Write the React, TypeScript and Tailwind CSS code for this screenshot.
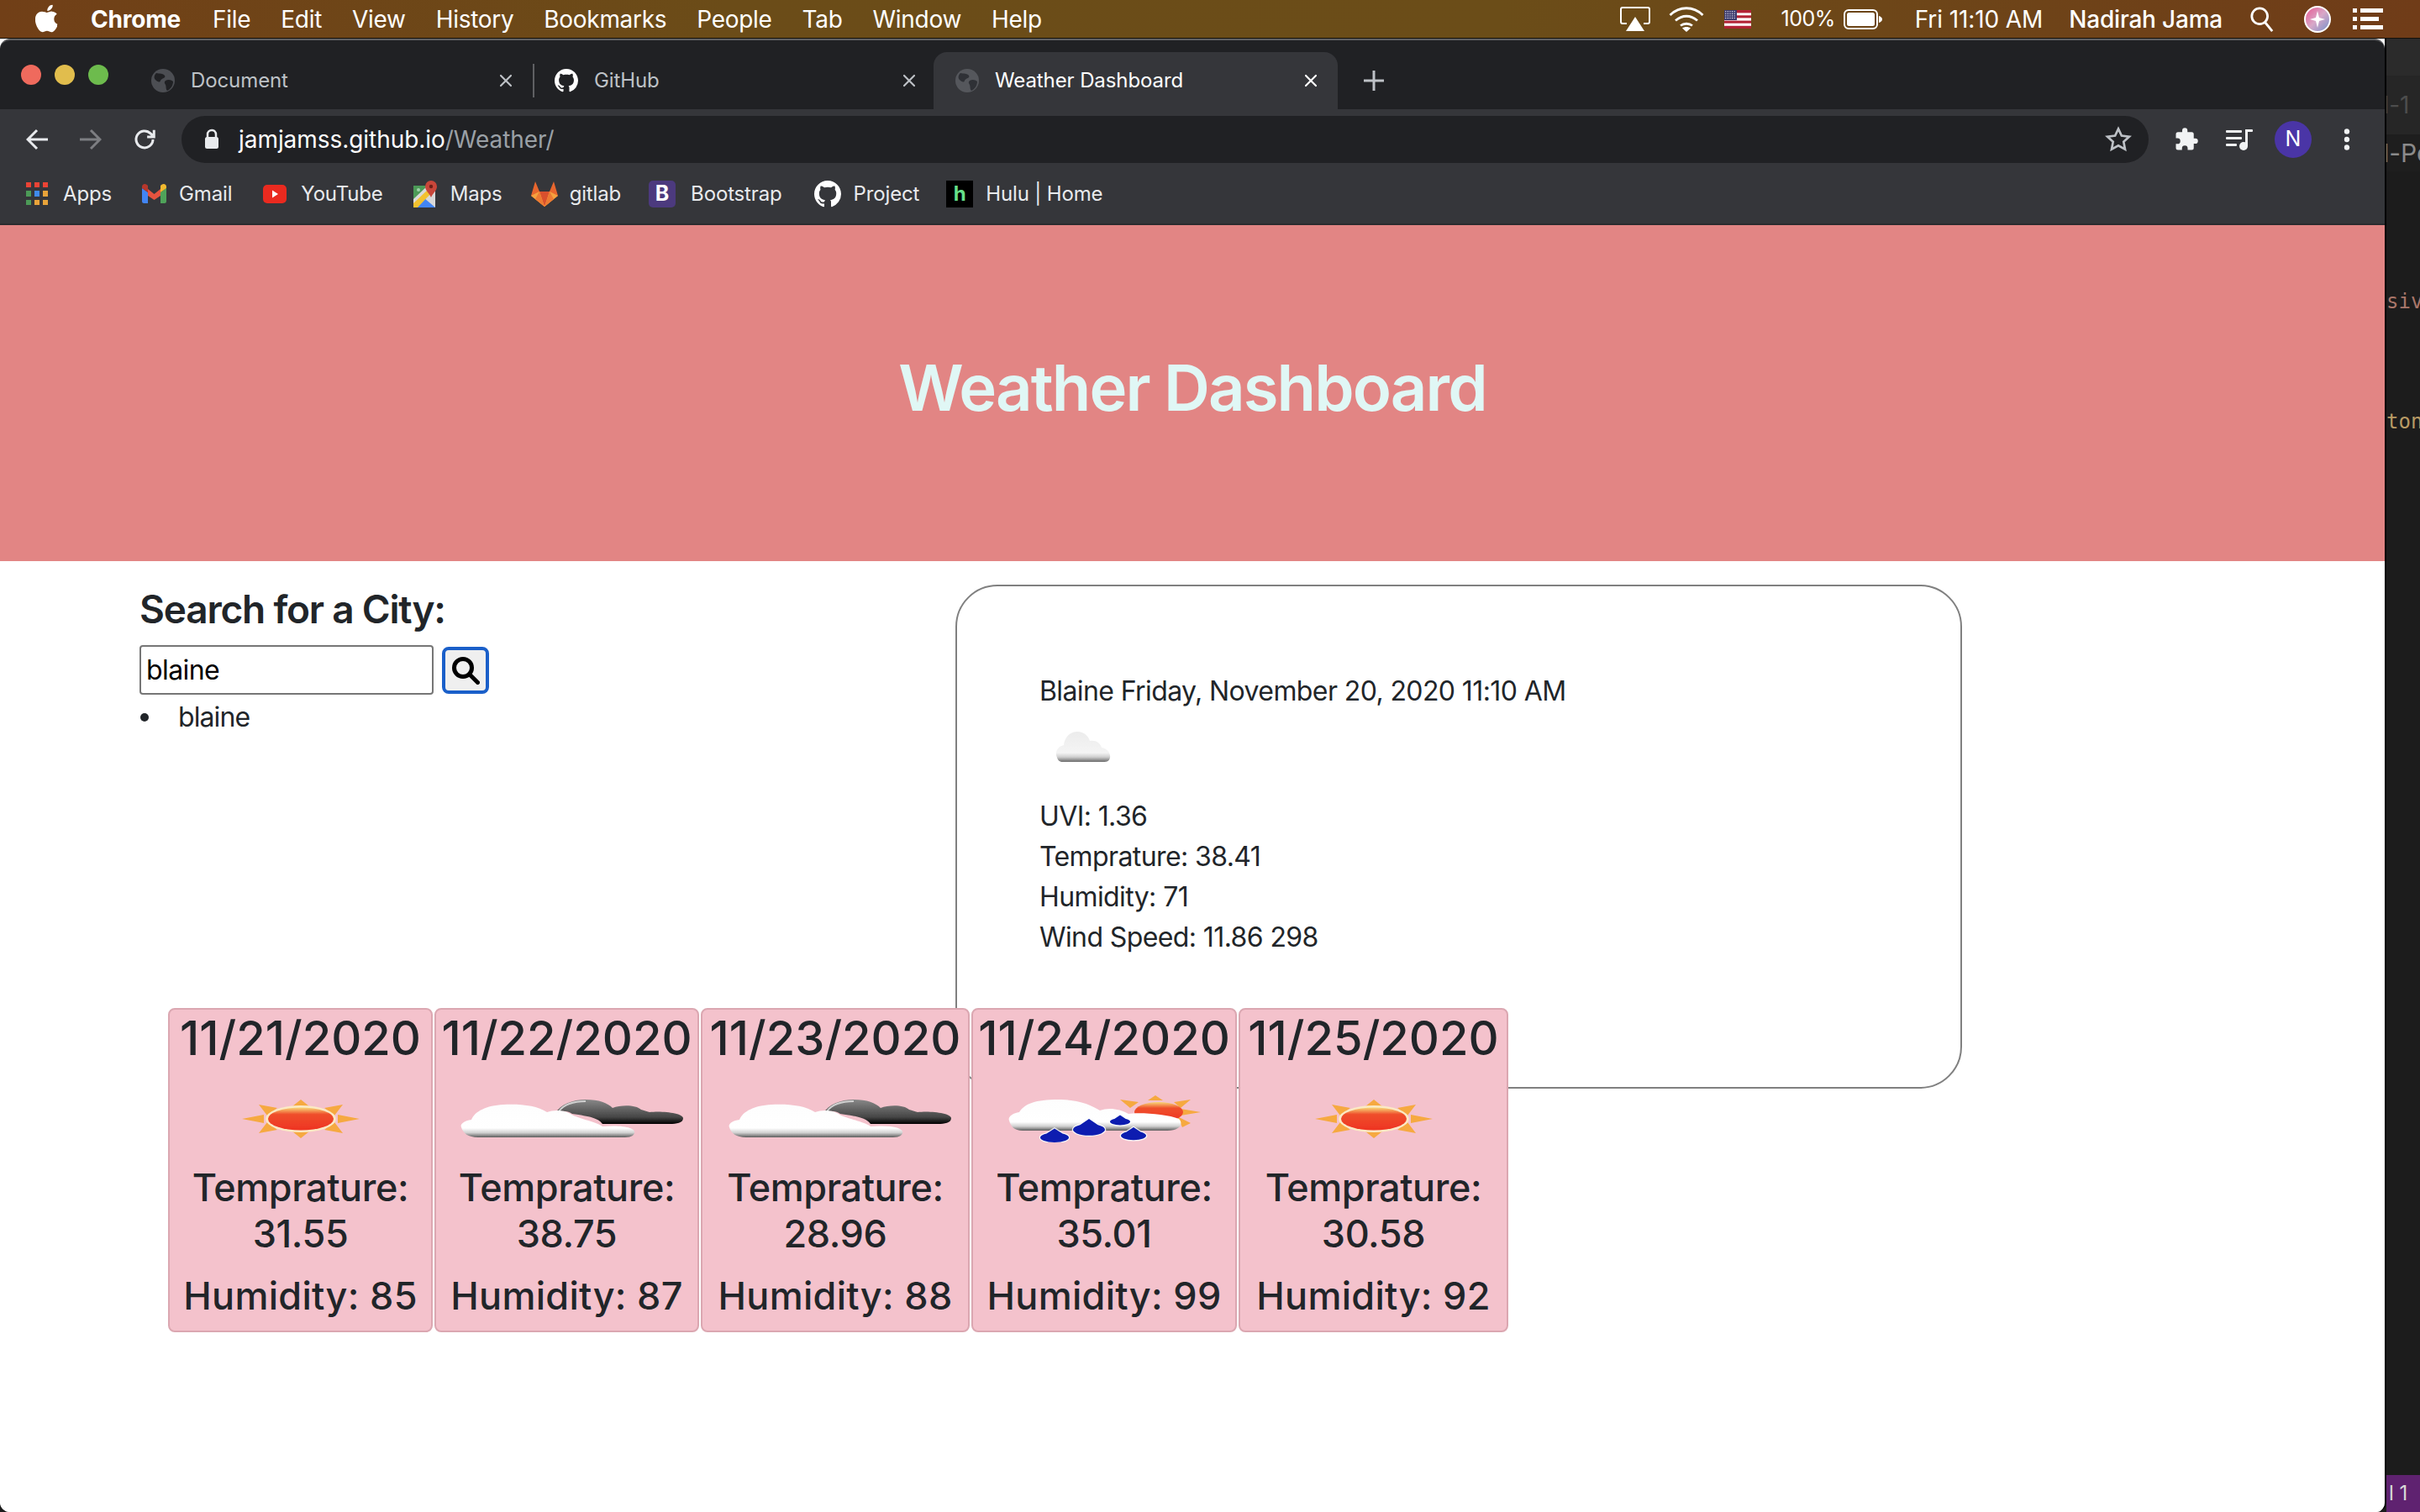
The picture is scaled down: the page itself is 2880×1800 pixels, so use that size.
import React from "react";

const UI = "font-['Inter','Liberation_Sans',sans-serif]";

function Globe({ dim = false }: { dim?: boolean }) {
  const c = dim ? "#55575c" : "#4c4e53";
  return (
    <svg width="28" height="28" viewBox="0 0 28 28">
      <circle cx="14" cy="14" r="14" fill={c} />
      <path d="M6 5c4 1 8 0 10 3s-4 3-5 6-4 1-6-1-2-5 1-8zM17 14c3-2 7-1 9 1 0 5-3 9-7 11-2-2-1-5-2-7s-2-3 0-5z" fill={dim ? "#2f3136" : "#202124"} />
    </svg>
  );
}

function GitHubMark({ size = 32 }: { size?: number }) {
  return (
    <svg width={size} height={size} viewBox="0 0 16 16" fill="#ffffff">
      <path d="M8 0C3.58 0 0 3.58 0 8c0 3.54 2.29 6.53 5.47 7.59.4.07.55-.17.55-.38 0-.19-.01-.82-.01-1.49-2.01.37-2.53-.49-2.69-.94-.09-.23-.48-.94-.82-1.13-.28-.15-.68-.52-.01-.53.63-.01 1.08.58 1.23.82.72 1.21 1.87.87 2.33.66.07-.52.28-.87.51-1.07-1.78-.2-3.64-.89-3.64-3.95 0-.87.31-1.59.82-2.15-.08-.2-.36-1.02.08-2.12 0 0 .67-.21 2.2.82.64-.18 1.32-.27 2-.27s1.36.09 2 .27c1.53-1.04 2.2-.82 2.2-.82.44 1.1.16 1.92.08 2.12.51.56.82 1.27.82 2.15 0 3.07-1.87 3.75-3.65 3.95.29.25.54.73.54 1.48 0 1.07-.01 1.93-.01 2.2 0 .21.15.46.55.38A8.01 8.01 0 0 0 16 8c0-4.42-3.58-8-8-8z" />
    </svg>
  );
}

function CloseX({ color = "#bdc1c6" }: { color?: string }) {
  return (
    <svg width="16" height="16" viewBox="0 0 16 16" stroke={color} strokeWidth="2.2" strokeLinecap="round">
      <path d="M2 2l12 12M14 2L2 14" />
    </svg>
  );
}

function Tab({ title, active, icon, cls }: { title: string; active?: boolean; icon: React.ReactNode; cls: string }) {
  return (
    <div className={`flex h-[68px] items-center ${cls} ${active ? "rounded-t-[16px] bg-[#35363a] text-[#ffffff]" : "text-[#bdc1c6]"}`}>
      <div className="flex w-[28px] shrink-0 justify-center">{icon}</div>
      <span className="ml-[19px] flex-1 text-[24px] leading-none tracking-[-0.1px]">{title}</span>
      <CloseX color={active ? "#ffffff" : "#bdc1c6"} />
    </div>
  );
}

function Apple() {
  return (
    <svg width="30" height="34" viewBox="0 0 170 200" fill="#fff">
      <path d="M150 156c-3 6-6 12-10 17-5 7-9 12-13 15-5 5-11 7-17 7-4 0-9-1-15-4-6-2-11-4-16-4s-11 1-17 4c-6 2-10 4-14 4-6 0-12-2-18-8-4-3-9-9-14-17-6-8-10-18-14-29-4-12-6-23-6-34 0-13 3-24 8-33 4-7 10-13 17-17s15-6 23-6c5 0 11 1 19 4s12 4 14 4c2 0 7-2 16-5 8-3 15-4 21-3 15 1 27 7 34 18-14 8-20 20-20 35 0 11 4 21 12 28 4 4 8 6 12 8-1 3-2 6-3 9zM119 7c0 9-3 18-10 26-8 9-18 15-28 14v-4c0-9 4-18 10-25 3-4 7-7 12-10s10-4 14-4c0 1 1 2 1 3z" />
    </svg>
  );
}

function MenuIcons() {
  const stars: React.ReactNode[] = [];
  for (let r = 0; r < 4; r++) {
    for (let c = 0; c < 5; c++) {
      stars.push(<rect key={`${r}-${c}`} x={1.2 + c * 2.6} y={1.2 + r * 2.6} width="1.1" height="1.1" fill="#fff" />);
    }
  }
  return (
    <div className="flex items-center">
      <svg width="36" height="29" viewBox="0 0 36 29">
        <path d="M8 20H3a2 2 0 0 1-2-2V3a2 2 0 0 1 2-2h30a2 2 0 0 1 2 2v15a2 2 0 0 1-2 2h-5" fill="none" stroke="#fff" strokeWidth="2" />
        <path d="M18 12l11 17H7z" fill="#fff" />
      </svg>
      <svg width="42" height="30" viewBox="0 0 42 30" className="ml-[22px]" fill="none" stroke="#fff" strokeWidth="2.800">
        <path d="M1.500 10c11-11 28-11 39 0M8 16.500c8-7 18-7 26 0M14 22.500c4-3 10-3 14 0" />
        <path d="M21 30l-5-4.500c3-2 7-2 10 0z" fill="#fff" stroke="none" />
      </svg>
      <svg width="32" height="22" viewBox="0 0 32 22" className="ml-[24px]">
        <rect width="32" height="22" fill="#fff" />
        <rect y="0" width="32" height="3.400" fill="#b22234" />
        <rect y="6.300" width="32" height="3.100" fill="#b22234" />
        <rect y="12.600" width="32" height="3.100" fill="#b22234" />
        <rect y="18.800" width="32" height="3.200" fill="#b22234" />
        <rect width="15" height="12" fill="#3c3b6e" />
        {stars}
      </svg>
    </div>
  );
}

function Battery() {
  return (
    <svg width="46" height="24" viewBox="0 0 46 24">
      <rect x="1" y="1" width="39" height="22" rx="5" fill="none" stroke="#fff" strokeWidth="2" />
      <rect x="4" y="4" width="33" height="16" rx="2.500" fill="#fff" />
      <path d="M42 8c2 .5 4 2 4 4s-2 3.500-4 4z" fill="#fff" />
    </svg>
  );
}

function Siri() {
  return (
    <svg width="32" height="32" viewBox="0 0 32 32">
      <defs>
        <linearGradient id="siri" x1="0" y1="0" x2="1" y2="1">
          <stop offset="0" stopColor="#e9558f" />
          <stop offset="0.5" stopColor="#d8a8c8" />
          <stop offset="1" stopColor="#6f8fc9" />
        </linearGradient>
      </defs>
      <circle cx="16" cy="16" r="15" fill="url(#siri)" stroke="#fff" strokeWidth="2" />
      <path d="M16 6l2 8 7 2-7 2-2 8-2-8-7-2 7-2z" fill="#fff" />
    </svg>
  );
}

function MenuBar() {
  return (
    <div className={`flex h-[46px] shrink-0 items-center border-b-[1px] border-[#14100a] bg-[linear-gradient(90deg,#713f17,#6b4c18_30%,#6b4d18_62%,#703c18)] text-[#ffffff] ${UI}`}>
      <div className="ml-[42px] mb-[2px]"><Apple /></div>
      <span className="ml-[36px] text-[28px] font-bold tracking-[-0.2px]">Chrome</span>
      <div className="ml-[38px] flex gap-[36px] text-[28px] font-normal tracking-[-0.3px]">
        <span>File</span><span>Edit</span><span>View</span><span>History</span><span>Bookmarks</span><span>People</span><span>Tab</span><span>Window</span><span>Help</span>
      </div>
      <div className="ml-auto flex items-center pr-[44px]">
        <MenuIcons />
        <span className="ml-[35px] text-[25px] tracking-[-0.5px]">100%</span>
        <div className="ml-[10px]"><Battery /></div>
        <span className="ml-[39px] text-[28px] tracking-[-0.1px]">Fri 11:10 AM</span>
        <span className="ml-[31px] text-[28px] font-medium tracking-[-0.2px]">Nadirah Jama</span>
        <svg width="30" height="34" viewBox="0 0 32 34" className="ml-[32px]" fill="none" stroke="#fff" strokeWidth="3">
          <circle cx="13" cy="13" r="10" />
          <path d="M20 21l9 11" />
        </svg>
        <div className="ml-[35px]"><Siri /></div>
        <svg width="36" height="28" viewBox="0 0 36 28" className="ml-[26px]" fill="#fff">
          <rect x="0" y="1" width="5" height="5" /><rect x="9" y="1" width="27" height="5" />
          <rect x="0" y="11" width="5" height="5" /><rect x="9" y="11" width="22" height="5" />
          <rect x="0" y="21" width="5" height="5" /><rect x="9" y="21" width="27" height="5" />
        </svg>
      </div>
    </div>
  );
}

function AppsIcon() {
  const colors = ["#ea4335", "#ea4335", "#ea4335", "#4c9a57", "#3f8bed", "#e8a33a", "#4c9a57", "#e8a33a", "#e8a33a"];
  return (
    <div className="grid h-[27px] w-[26px] grid-cols-3 gap-[4px]">
      {colors.map((c, i) => (
        <div key={i} style={{ backgroundColor: c }} />
      ))}
    </div>
  );
}

function GmailIcon() {
  return (
    <svg width="29" height="23" viewBox="0 0 29 23">
      <path d="M0 5l7 5v13H2.500A2.500 2.500 0 0 1 0 20.500z" fill="#4285f4" />
      <path d="M29 5l-7 5v13h4.500a2.500 2.500 0 0 0 2.500-2.500z" fill="#4fa35a" />
      <path d="M7 6l7.500 6L22 6v8l-7.500 5L7 14z" fill="#e5533f" />
      <path d="M0 3.500C0 .5 3 -1 5.500 .8L7 2v8L0 5z" fill="#b5372c" />
      <path d="M29 3.500C29 .5 26 -1 23.500 .8L22 2v8l7-5z" fill="#f2b92f" />
    </svg>
  );
}

function YoutubeIcon() {
  return (
    <svg width="28" height="22" viewBox="0 0 28 22">
      <rect width="28" height="22" rx="5" fill="#ea2a1f" />
      <path d="M11 6.500l7 4.500-7 4.500z" fill="#fff" />
    </svg>
  );
}

function MapsIcon() {
  return (
    <svg width="30" height="32" viewBox="0 0 30 32">
      <path d="M1 6h26v26H1z" fill="#d9d9d9" />
      <path d="M1 6h17L1 22z" fill="#4c9a57" />
      <path d="M1 32l12-12 14 12z" fill="#4285f4" />
      <path d="M1 27L20 9l4 4L6 32H1z" fill="#f2c230" />
      <circle cx="7" cy="11" r="2" fill="#9fd0a8" />
      <path d="M22 0a7 7 0 0 1 7 7c0 5-5 8-7 13-2-5-7-8-7-13a7 7 0 0 1 7-7z" fill="#c8463a" />
      <circle cx="22" cy="7" r="2.200" fill="#6e2018" />
    </svg>
  );
}

function GitlabIcon() {
  return (
    <svg width="32" height="30" viewBox="0 0 32 30">
      <path d="M16 30L0 17 5 0l5 12h12l5-12 5 17z" fill="#e8662e" />
      <path d="M16 30L10 12h12z" fill="#d9502d" />
      <path d="M16 30L0 17l10-5z" fill="#f4a23f" />
      <path d="M16 30l16-13-10-5z" fill="#f4a23f" />
      <path d="M16 30l-11-9 5-9zM16 30l11-9-5-9z" fill="#ec7a33" />
    </svg>
  );
}

function BootstrapIcon() {
  return (
    <div className="flex h-[32px] w-[32px] items-center justify-center rounded-[5px] bg-[#4c3a7e] text-[25px] font-bold leading-none text-[#ffffff]">B</div>
  );
}

function HuluIcon() {
  return (
    <div className="flex h-[32px] w-[32px] items-center justify-center bg-[#000000] text-[24px] font-bold leading-none text-[#66e08a]">h</div>
  );
}

function Bookmark({ icon, label, cls }: { icon: React.ReactNode; label: string; cls: string }) {
  return (
    <div className={`flex items-center ${cls}`}>
      <div className="flex w-[32px] shrink-0 justify-center">{icon}</div>
      <span className="text-[24px] tracking-[-0.15px] text-[#e8eaed]">{label}</span>
    </div>
  );
}

function BrowserChrome() {
  return (
    <div className={`shrink-0 ${UI}`}>
      <div className="h-[16px] rounded-t-[12px] border-t-[2px] border-[#5f6063] bg-[#202124]" />
      <div className="flex h-[68px] items-stretch bg-[#202124]">
        <div className="ml-[25px] mr-[25px] flex items-center gap-[16px] pb-[14px]">
          <div className="h-[24px] w-[24px] rounded-full bg-[#ef6a5d]" />
          <div className="h-[24px] w-[24px] rounded-full bg-[#e1bd4d]" />
          <div className="h-[24px] w-[24px] rounded-full bg-[#6dbb4d]" />
        </div>
        <Tab title="Document" icon={<Globe />} cls="w-[480px] pl-[26px] pr-[24px]" />
        <div className="my-[14px] w-[2px] bg-[#5f6063]" />
        <Tab title="GitHub" icon={<GitHubMark size={32} />} cls="w-[475px] pl-[24px] pr-[21px]" />
        <Tab title="Weather Dashboard" active icon={<Globe dim />} cls="w-[481px] pl-[26px] pr-[24px]" />
        <div className="ml-[31px] flex items-center">
          <svg width="24" height="24" viewBox="0 0 24 24" stroke="#bdc1c6" strokeWidth="3">
            <path d="M12 0v24M0 12h24" />
          </svg>
        </div>
      </div>
      <div className="flex h-[72px] items-center bg-[#35363a]">
        <div className="ml-[31px] flex items-center">
          <svg width="26" height="26" viewBox="0 0 26 26" fill="none" stroke="#e8eaed" strokeWidth="3">
            <path d="M26 13H3M13 2L2 13l11 11" />
          </svg>
          <svg width="26" height="26" viewBox="0 0 26 26" fill="none" stroke="#7d7e82" strokeWidth="3" className="ml-[38px]">
            <path d="M0 13h23M13 2l11 11-11 11" />
          </svg>
          <svg width="30" height="30" viewBox="0 0 24 24" fill="none" stroke="#e8eaed" strokeWidth="2.400" className="ml-[36px]">
            <path d="M20 12a8 8 0 1 1-2.300-5.700L21 9.500M21 3v6.500h-6.500" />
          </svg>
        </div>
        <div className="ml-[29px] flex h-[56px] flex-1 items-center rounded-full bg-[#202124] pl-[26px] pr-[20px]">
          <svg width="20" height="26" viewBox="0 0 20 26" fill="#e8eaed">
            <rect x="2" y="10" width="16" height="14" rx="2.500" />
            <path d="M5 11V7a5 5 0 0 1 10 0v4" fill="none" stroke="#e8eaed" strokeWidth="2.500" />
          </svg>
          <span className="ml-[22px] text-[28px] tracking-[-0.05px] text-[#ffffff]">jamjamss.github.io<span className="text-[#9aa0a6]">/Weather/</span></span>
          <svg width="32" height="32" viewBox="0 0 24 24" fill="none" stroke="#bdc1c6" strokeWidth="2" className="ml-auto">
            <path d="M12 2.500l2.900 6.200 6.800.8-5 4.600 1.300 6.700-6-3.300-6 3.300 1.300-6.700-5-4.600 6.800-.8z" />
          </svg>
        </div>
        <svg width="30" height="30" viewBox="0 0 24 24" fill="#f1f3f4" className="ml-[30px]">
          <path d="M20.500 11H19V7a2 2 0 0 0-2-2h-4V3.500a2.500 2.500 0 0 0-5 0V5H4a2 2 0 0 0-2 2v3.800h1.500a2.700 2.700 0 0 1 0 5.400H2V20a2 2 0 0 0 2 2h3.800v-1.500a2.700 2.700 0 0 1 5.400 0V22H17a2 2 0 0 0 2-2v-4h1.500a2.500 2.500 0 0 0 0-5z" />
        </svg>
        <svg width="32" height="26" viewBox="0 0 32 26" fill="#f1f3f4" className="ml-[32px]">
          <rect x="0" y="2" width="19" height="3" rx="1" />
          <rect x="0" y="10" width="19" height="3" rx="1" />
          <rect x="0" y="18" width="13" height="3" rx="1" />
          <rect x="23" y="1" width="3" height="20" />
          <rect x="23" y="1" width="9" height="3" rx="1" />
          <circle cx="21" cy="21" r="5" />
        </svg>
        <div className="ml-[26px] flex h-[44px] w-[44px] items-center justify-center rounded-full bg-[#4a35a6] text-[25px] text-[#ffffff]">N</div>
        <svg width="8" height="26" viewBox="0 0 8 26" fill="#f1f3f4" className="ml-[38px] mr-[41px]">
          <circle cx="4" cy="3.500" r="3.200" /><circle cx="4" cy="13" r="3.200" /><circle cx="4" cy="22.500" r="3.200" />
        </svg>
      </div>
      <div className="flex h-[66px] items-center border-b-[2px] border-[#2b2c2f] bg-[#35363a] pb-[7px]">
        <div className="ml-[28px] flex items-center">
          <Bookmark cls="gap-[15px]" icon={<AppsIcon />} label="Apps" />
          <Bookmark cls="ml-[34px] gap-[14px]" icon={<GmailIcon />} label="Gmail" />
          <Bookmark cls="ml-[35px] gap-[15px]" icon={<YoutubeIcon />} label="YouTube" />
          <Bookmark cls="ml-[34px] gap-[14px]" icon={<MapsIcon />} label="Maps" />
          <Bookmark cls="ml-[34px] gap-[14px]" icon={<GitlabIcon />} label="gitlab" />
          <Bookmark cls="ml-[33px] gap-[18px]" icon={<BootstrapIcon />} label="Bootstrap" />
          <Bookmark cls="ml-[38px] gap-[15px]" icon={<GitHubMark size={32} />} label="Project" />
          <Bookmark cls="ml-[32px] gap-[15px]" icon={<HuluIcon />} label="Hulu | Home" />
        </div>
      </div>
    </div>
  );
}

function Defs() {
  return (
    <svg width="0" height="0" className="absolute">
      <defs>
        <filter id="soft" x="-5%" y="-5%" width="110%" height="110%">
          <feGaussianBlur stdDeviation="0.7" />
        </filter>
        <linearGradient id="white-cloud" x1="0" y1="0" x2="0" y2="1">
          <stop offset="0" stopColor="#fdfdfd" />
          <stop offset="0.72" stopColor="#ffffff" />
          <stop offset="0.86" stopColor="#d0d0d0" />
          <stop offset="1" stopColor="#5c5c5c" />
        </linearGradient>
        <linearGradient id="small-cloud" x1="0" y1="0" x2="0" y2="1">
          <stop offset="0" stopColor="#ececec" />
          <stop offset="0.7" stopColor="#f4f4f4" />
          <stop offset="0.84" stopColor="#cfcfcf" />
          <stop offset="1" stopColor="#6a6a6a" />
        </linearGradient>
        <linearGradient id="dark-cloud" x1="0" y1="0" x2="0" y2="1">
          <stop offset="0" stopColor="#888888" />
          <stop offset="0.72" stopColor="#464646" />
          <stop offset="1" stopColor="#000000" />
        </linearGradient>
        <linearGradient id="sun-body" x1="0" y1="0" x2="0" y2="1">
          <stop offset="0" stopColor="#f8d878" />
          <stop offset="0.3" stopColor="#ef4f2c" />
          <stop offset="1" stopColor="#ee3322" />
        </linearGradient>
      </defs>
    </svg>
  );
}

function SunIcon() {
  return (
    <svg width="140" height="46" viewBox="0 0 140 46">
      <g filter="url(#soft)">
        <g fill="#f6a941">
          <path d="M0 23l26-5v10zM140 23l-26-5v10zM70 0l-10 8h20zM70 46l-10-8h20z" />
          <path d="M20 6l22 4-12 9zM120 6l-22 4 12 9zM20 40l22-4-12-9zM120 40l-22-4 12-9z" />
        </g>
        <ellipse cx="70" cy="23" rx="42" ry="16" fill="#fbe9c4" />
        <ellipse cx="70" cy="23" rx="39" ry="13.500" fill="url(#sun-body)" />
      </g>
    </svg>
  );
}

function CloudsIcon() {
  return (
    <svg width="266" height="46" viewBox="0 0 266 46" className="ml-[10px]">
      <g filter="url(#soft)">
        <path d="M114 16C120 6 134 0 150 0c16 0 26 4 32 10 10-4 28-4 34 2 4 1 6 2 10 3 14-2 40 1 40 7 0 6-8 7-16 7h-80c-5-7-15-9-36-12-6-4-14-4-20-1z" fill="url(#dark-cloud)" />
        <path d="M118 14C124 6 136 2 150 2" fill="none" stroke="#d0d0d0" strokeWidth="2" />
        <path d="M2 33c-2-4 4-8 12-9C18 14 32 7 52 6c20-1 40 1 52 9 8-3 20-3 28 2 4 4 32 10 38 15 26-2 40 2 38 8-2 5-8 5-18 5H22C10 45 4 40 2 33z" fill="url(#white-cloud)" />
      </g>
    </svg>
  );
}

function Drop({ x, y, w, h }: { x: number; y: number; w: number; h: number }) {
  return (
    <g>
      <path d={`M${x} ${y - h / 2}L${x + w * 0.28} ${y - h * 0.1}A${w / 2} ${h * 0.38} 0 1 1 ${x - w * 0.28} ${y - h * 0.1}Z`} fill="#0a1fb0" stroke="#ffffff" strokeOpacity="0.85" strokeWidth="2.500" paintOrder="stroke" />
    </g>
  );
}

function RainIcon() {
  return (
    <svg width="230" height="56" viewBox="0 0 230 56">
      <g filter="url(#soft)">
        <g fill="#f6a941">
          <path d="M176 0l-9 6h18zM230 20l-24-4v8zM134 5l22 3-10 7zM218 5l-20 3 8 7zM218 33l-16-8 6 13z" />
        </g>
        <ellipse cx="180" cy="20" rx="29" ry="12" fill="url(#sun-body)" />
        <path d="M2 30c-2-4 4-9 12-10C20 10 34 5 60 5c26 0 40 7 50 13 10-4 24-2 34 4 12-2 46 0 60 6 6 6 1 14-14 14H18C8 42 4 37 2 30z" fill="url(#white-cloud)" />
        <Drop x={56} y={47} w={34} h={15} />
        <Drop x={97} y={37} w={38} h={18} />
        <Drop x={134} y={29} w={24} h={11} />
        <Drop x={150} y={45} w={30} h={14} />
      </g>
    </svg>
  );
}

function SmallCloud() {
  return (
    <svg width="68" height="38" viewBox="0 0 68 38">
      <g filter="url(#soft)">
        <path d="M3 32c-3-6 0-13 8-15C12 7 19 1 27 1c8 0 13 5 15 11 7-1 12 2 14 8 6 1 11 6 10 12-1 4-3 5-8 5H10c-4 0-6-2-7-5z" fill="url(#small-cloud)" />
      </g>
    </svg>
  );
}

function Card({ date, icon, temp, hum, w }: { date: string; icon: React.ReactNode; temp: string; hum: string; w: string }) {
  return (
    <div className={`flex h-[386px] shrink-0 flex-col items-center rounded-[8px] border-[2px] border-[#dba7b1] bg-[#f4c2cc] text-center text-[#212529] ${w}`}>
      <div className="mt-[4px] text-[56px] leading-[60px] font-medium whitespace-nowrap">{date}</div>
      <div className="mt-[36px] flex h-[60px] items-center justify-center">{icon}</div>
      <div className="mt-[24px] text-[45px] leading-[55px] font-medium tracking-[-0.4px] whitespace-nowrap">
        Temprature:
        <br />
        {temp}
      </div>
      <div className="mt-[19px] text-[45px] leading-[55px] font-medium tracking-[0.3px] whitespace-nowrap">{hum}</div>
    </div>
  );
}

function Page() {
  return (
    <div className={`flex-1 bg-[#ffffff] text-[#212529] ${UI}`}>
      <Defs />
      <div className="flex h-[400px] items-center justify-center bg-[#e28584] pb-[14px]">
        <h1 className="text-[76px] font-semibold tracking-[-1.9px] text-[#e0f7f5]">Weather Dashboard</h1>
      </div>
      <div className="flex items-start pl-[166px]">
        <div className="w-[971px] pt-[28px]">
          <h3 className="text-[46px] leading-[58px] font-semibold tracking-[-1.2px]">Search for a City:</h3>
          <div className="mt-[14px] flex items-center">
            <div className="flex h-[59px] w-[350px] items-center rounded-[4px] border-[2px] border-[#767676] pl-[6px] text-[32px] tracking-[-0.6px] text-[#000000]">blaine</div>
            <button className="ml-[10px] flex h-[56px] w-[56px] items-center justify-center rounded-[8px] border-[4px] border-[#1a5fc9] bg-[#efefef]">
              <svg width="34" height="34" viewBox="0 0 34 34" fill="none" stroke="#000000" strokeWidth="5">
                <circle cx="14" cy="14" r="10.500" />
                <path d="M21.500 21.500l10 10" strokeLinecap="round" />
              </svg>
            </button>
          </div>
          <ul className="mt-[3px] text-[32px] leading-[48px] tracking-[-0.9px]">
            <li className="flex items-center">
              <span className="ml-[1px] mr-[35px] h-[10px] w-[10px] rounded-full bg-[#212529]" />
              blaine
            </li>
          </ul>
        </div>
        <div className="mt-[28px] h-[600px] w-[1198px] rounded-[50px] border-[2px] border-[#808080] pl-[98px] pt-[101px] text-[32px] leading-[48px] tracking-[-0.6px]">
          <div>Blaine Friday, November 20, 2020 11:10 AM</div>
          <div className="ml-[18px] mt-[23px] h-[78px]"><SmallCloud /></div>
          <div>UVI: 1.36</div>
          <div>Temprature: 38.41</div>
          <div>Humidity: 71</div>
          <div>Wind Speed: 11.86 298</div>
        </div>
      </div>
      <div className="relative z-10 -mt-[96px] flex gap-[2px] pl-[200px]">
        <Card w="w-[315px]" date="11/21/2020" icon={<SunIcon />} temp="31.55" hum="Humidity: 85" />
        <Card w="w-[315px]" date="11/22/2020" icon={<CloudsIcon />} temp="38.75" hum="Humidity: 87" />
        <Card w="w-[320px]" date="11/23/2020" icon={<CloudsIcon />} temp="28.96" hum="Humidity: 88" />
        <Card w="w-[316px]" date="11/24/2020" icon={<RainIcon />} temp="35.01" hum="Humidity: 99" />
        <Card w="w-[321px]" date="11/25/2020" icon={<SunIcon />} temp="30.58" hum="Humidity: 92" />
      </div>
    </div>
  );
}

function EditorSliver() {
  return (
    <div className="w-[40px] shrink-0 overflow-hidden bg-[#1c1c1c] font-['DejaVu_Sans_Mono','Liberation_Mono',monospace] text-[24px]">
      <div className="h-[44px] bg-[#2b2b2b]" />
      <div className={`flex h-[70px] items-center bg-[#262626] text-[28px] whitespace-nowrap text-[#4d4d4d] ${UI}`}>
        <span className="-ml-[14px]">d-1</span>
      </div>
      <div className={`flex h-[44px] items-center bg-[#1e1e1e] text-[30px] whitespace-nowrap text-[#8a8a8a] ${UI}`}>
        <span className="-ml-[4px]">l-Po</span>
      </div>
      <div className="mt-[140px] h-[30px] leading-[30px] whitespace-nowrap text-[#a9766a]">siv</div>
      <div className="mt-[113px] h-[30px] leading-[30px] whitespace-nowrap text-[#b89a64]">ton</div>
      <div className={`mt-[1239px] flex h-[44px] items-center bg-[#5f2270] pl-[3px] text-[24px] whitespace-nowrap text-[#d8d8d8] ${UI}`}>l 1</div>
    </div>
  );
}

export default function App() {
  return (
    <div className="flex h-[1800px] w-[2880px] flex-col overflow-hidden bg-[#1c1c1c]">
      <MenuBar />
      <div className="flex h-[1754px]">
        <div className="flex w-[2840px] flex-col overflow-hidden rounded-b-[12px] border-r-[2px] border-[#000000] bg-[#ffffff]">
          <BrowserChrome />
          <Page />
        </div>
        <EditorSliver />
      </div>
    </div>
  );
}
